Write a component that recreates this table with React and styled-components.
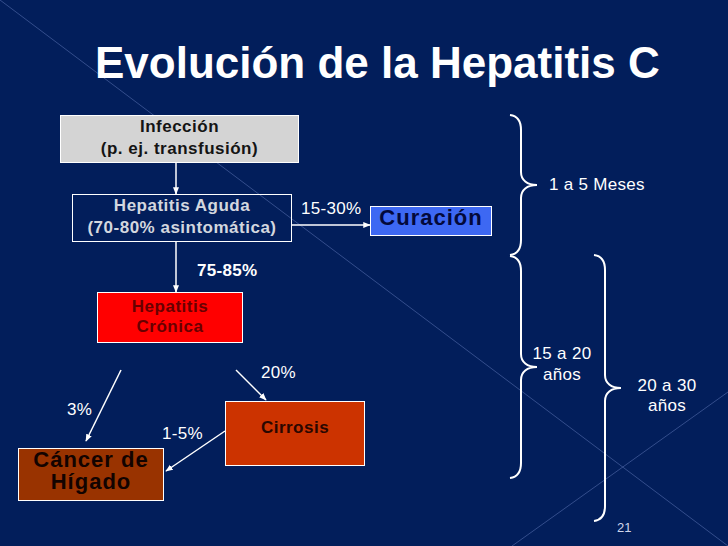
import styled, { createGlobalStyle } from 'styled-components';

// diapositiva: evolución de la hepatitis C (diagrama de flujo con llaves de tiempo)

const TOP = 100; // altura del título, el lienzo empieza aquí

const GlobalStyle = createGlobalStyle`
  html, body {
    margin: 0;
    padding: 0;
    background: #021e5b;
  }
  body {
    font-family: "Liberation Sans", Arial, sans-serif;
  }
`;

const nodes = [
  { id: 'infeccion', x: 60, y: 115, w: 239, h: 48, bg: '#d4d4d4', ink: '#141414', size: 17, lh: 22, pt: 0, text: 'Infección\n(p. ej. transfusión)' },
  { id: 'aguda', x: 72, y: 194, w: 220, h: 48, bg: 'transparent', ink: '#d3d7df', size: 17, lh: 22, pt: 0, text: 'Hepatitis Aguda\n(70-80% asintomática)' },
  { id: 'curacion', x: 370, y: 206, w: 122, h: 30, bg: '#3d68f3', ink: '#03093a', size: 22, lh: 22, pt: 0, ls: 1, text: 'Curación' },
  { id: 'cronica', x: 97, y: 292, w: 146, h: 51, bg: '#ff0000', ink: '#680000', size: 17, lh: 20, pt: 4, text: 'Hepatitis\nCrónica' },
  { id: 'cirrosis', x: 225, y: 401, w: 140, h: 65, bg: '#cc3300', ink: '#2a0700', size: 17, lh: 20, pt: 16, text: 'Cirrosis' },
  { id: 'cancer', x: 18, y: 448, w: 146, h: 53, bg: '#993300', ink: '#120300', size: 22, lh: 22, pt: 0, ls: 1, text: 'Cáncer de\nHígado' },
];

const labels = [
  { text: '15-30%', x: 301, y: 199 },
  { text: '1 a 5 Meses', x: 549, y: 175 },
  { text: '75-85%', x: 197, y: 261, bold: true },
  { text: '20%', x: 261, y: 363 },
  { text: '3%', x: 67, y: 400 },
  { text: '1-5%', x: 162, y: 424 },
  { text: '15 a 20\naños', x: 522, y: 343, w: 80, lh: 21 },
  { text: '20 a 30\naños', x: 627, y: 376, w: 80 },
];

const arrows = [
  [176, 163, 176, 194],
  [292, 225, 370, 225],
  [176, 242, 176, 292],
  [121, 370, 86, 441],
  [236, 370, 266, 400],
  [225, 431, 166, 471],
];

// llave "}" de (x, y1) a (x, y2), trazo vertical en x+11 y punta en (x+27, tipY)
function bracePath(x, y1, y2, tipY) {
  const v = x + 11;
  const t = x + 27;
  return [
    `M${x},${y1}`,
    `C${x + 8},${y1 + 1} ${v},${y1 + 6} ${v},${y1 + 15}`,
    `V${tipY - 13}`,
    `C${v},${tipY - 5} ${v + 6},${tipY} ${t},${tipY}`,
    `C${v + 6},${tipY} ${v},${tipY + 5} ${v},${tipY + 13}`,
    `V${y2 - 15}`,
    `C${v},${y2 - 6} ${x + 8},${y2 - 1} ${x},${y2}`,
  ].join(' ');
}

const braces = [
  bracePath(510, 115, 255, 185),
  bracePath(510, 256, 478, 367),
  bracePath(594, 255, 521, 388),
];

function App() {
  return (
    <>
      <GlobalStyle />
      <Slide>
        <Backdrop viewBox="0 0 728 546">
          <line x1="0" y1="0" x2="728" y2="546" />
          <line x1="728" y1="392" x2="512" y2="546" />
        </Backdrop>

        <Title>Evolución de la Hepatitis C</Title>

        <Canvas>
          <Links viewBox={`0 ${TOP} 728 446`}>
            <defs>
              <marker id="head" viewBox="0 0 10 10" refX="9" refY="5" markerWidth="5" markerHeight="5" orient="auto">
                <path d="M0,1 L10,5 L0,9 z" fill="#fff" />
              </marker>
            </defs>
            {arrows.map(([x1, y1, x2, y2], i) => (
              <line key={i} x1={x1} y1={y1} x2={x2} y2={y2} markerEnd="url(#head)" />
            ))}
            {braces.map((d, i) => (
              <path key={i} className="brace" d={d} />
            ))}
          </Links>

          {nodes.map(n => (
            <Node
              key={n.id}
              $x={n.x}
              $y={n.y}
              $w={n.w}
              $h={n.h}
              $bg={n.bg}
              $ink={n.ink}
              $size={n.size}
              $lh={n.lh}
              $pt={n.pt}
              $ls={n.ls ?? 0.5}
            >
              {n.text}
            </Node>
          ))}

          {labels.map(l => (
            <Label key={l.text} $x={l.x} $y={l.y} $w={l.w} $lh={l.lh ?? 20} $bold={l.bold}>
              {l.text}
            </Label>
          ))}

          <PageNumber>21</PageNumber>
        </Canvas>
      </Slide>
    </>
  );
}

export default App;

const Slide = styled.div`
  position: relative;
  width: 728px;
  height: 546px;
  overflow: hidden;
  background: #021e5b;
`;

const Backdrop = styled.svg`
  position: absolute;
  inset: 0;
  width: 728px;
  height: 546px;

  line {
    stroke: #5d74b4;
    stroke-opacity: 0.55;
    stroke-width: 1;
  }
`;

const Title = styled.h1`
  position: relative;
  box-sizing: border-box;
  height: ${TOP}px;
  margin: 0;
  padding: 41px 0 0 95px;
  color: #ffffff;
  font-size: 44px;
  font-weight: bold;
  line-height: 44px;
  white-space: nowrap;
`;

const Canvas = styled.div`
  position: relative;
  height: 446px;
`;

const Links = styled.svg`
  position: absolute;
  inset: 0;
  width: 728px;
  height: 446px;
  overflow: visible;

  line {
    stroke: #ffffff;
    stroke-width: 1.5;
  }

  .brace {
    fill: none;
    stroke: #ffffff;
    stroke-width: 2;
  }
`;

const Node = styled.div`
  position: absolute;
  left: ${p => p.$x}px;
  top: ${p => p.$y - TOP}px;
  width: ${p => p.$w}px;
  height: ${p => p.$h}px;
  box-sizing: border-box;
  padding-top: ${p => p.$pt}px;
  border: 1px solid #ffffff;
  background: ${p => p.$bg};
  color: ${p => p.$ink};
  font-size: ${p => p.$size}px;
  font-weight: bold;
  line-height: ${p => p.$lh}px;
  letter-spacing: ${p => p.$ls}px;
  text-align: center;
  white-space: pre;
`;

const Label = styled.div`
  position: absolute;
  left: ${p => p.$x}px;
  top: ${p => p.$y - TOP}px;
  width: ${p => (p.$w ? `${p.$w}px` : 'auto')};
  color: #ffffff;
  font-size: 17px;
  font-weight: ${p => (p.$bold ? 'bold' : 'normal')};
  letter-spacing: 0.3px;
  line-height: ${p => p.$lh}px;
  text-align: center;
  white-space: pre;
`;

const PageNumber = styled.div`
  position: absolute;
  left: 617px;
  top: ${520 - TOP}px;
  color: #cfd6ea;
  font-size: 13px;
  line-height: 16px;
`;
